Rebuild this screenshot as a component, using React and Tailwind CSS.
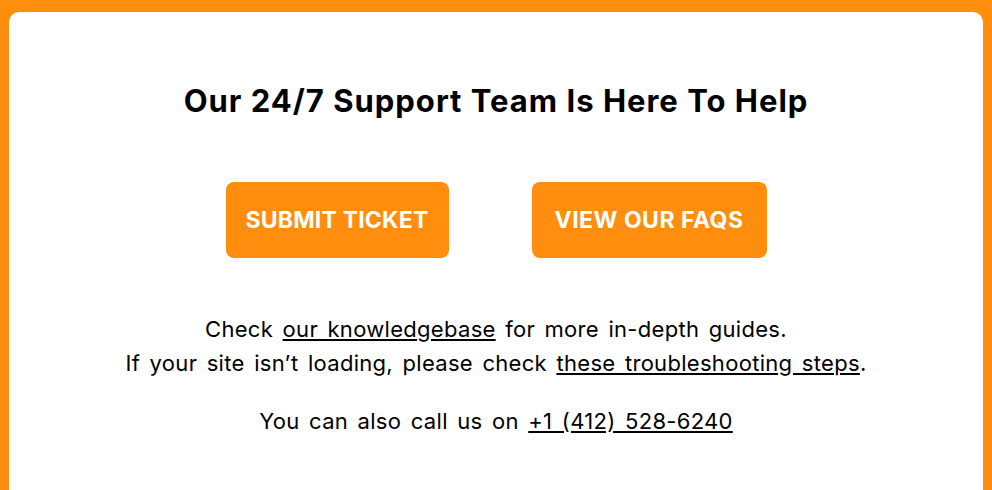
export default function App() {
  const font = { fontFamily: 'Inter, "Noto Sans", sans-serif' }
  return (
    <div className="min-h-[490px] bg-[#ff8e0e] pt-[12px] px-[9px]" style={font}>
      <div className="bg-white rounded-[10px] min-h-[500px] flex flex-col items-center pt-[69px] text-black">
        <h1 className="text-[31px] font-bold leading-[40px] tracking-[1px]">
          Our 24/7 Support Team Is Here To Help
        </h1>
        <div className="flex gap-[83px] mt-[61px]">
          <a href="#" className="w-[223px] h-[76px] flex items-center justify-center rounded-[8px] bg-[#ff8e0e] text-white font-bold text-[23px] tracking-[0.2px] uppercase">
            Submit Ticket
          </a>
          <a href="#" className="w-[235px] h-[76px] flex items-center justify-center rounded-[8px] bg-[#ff8e0e] text-white font-bold text-[23px] tracking-[0.5px] uppercase">
            View Our FAQs
          </a>
        </div>
        <div className="mt-[54px] text-[22px] leading-[34px] text-center tracking-[0.3px] [word-spacing:3px]">
          <p>
            Check <a href="#" className="underline">our knowledgebase</a> for more in-depth guides.
          </p>
          <p>
            If your site isn’t loading, please check <a href="#" className="underline">these troubleshooting steps</a>.
          </p>
          <p className="mt-[24px]">
            You can also call us on <a href="#" className="underline">+1 (412) 528-6240</a>
          </p>
        </div>
      </div>
    </div>
  )
}
